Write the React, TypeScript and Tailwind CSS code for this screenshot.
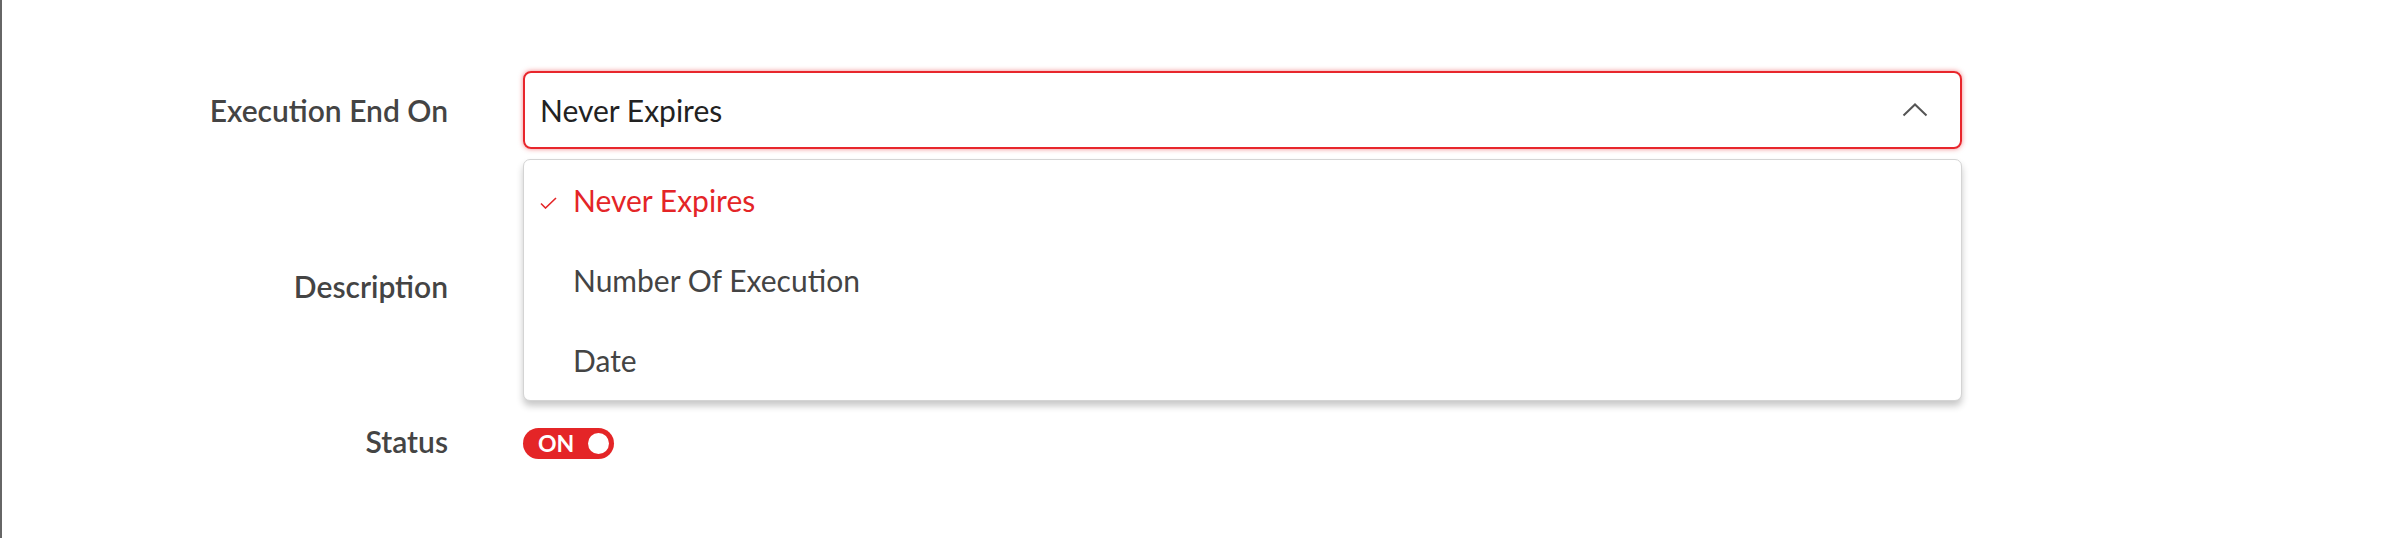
import { useState } from 'react';

const options = ['Never Expires', 'Number Of Execution', 'Date'];

function ChevronUp() {
  return (
    <svg width="26" height="14" viewBox="0 0 26 14" fill="none">
      <path d="M1.5 12.5L13 1.5L24.5 12.5" stroke="#555" strokeWidth="2" />
    </svg>
  );
}

function Check() {
  return (
    <svg width="17" height="12" viewBox="0 0 17 12" fill="none">
      <path d="M1 6.5L5.5 11L16 1" stroke="#e42527" strokeWidth="1.6" />
    </svg>
  );
}

export default function App() {
  const [selected] = useState(options[0]);

  return (
    <div className="h-[538px] w-full border-l-2 border-[#666] bg-white font-['Lato',sans-serif]">
      <div className="grid grid-cols-[446px_1439px] gap-x-[75px] pt-[71px]">
        <div className="flex h-[78px] items-center justify-end text-[30px] font-semibold text-[#444]">
          Execution End On
        </div>
        <div className="relative">
          <div className="flex h-[78px] items-center justify-between rounded-[8px] border-2 border-[#e8262c] pl-[15px] pr-[32px] text-[30px] text-[#222] shadow-[0_0_5px_rgba(232,38,44,0.55)]">
            <span>{selected}</span>
            <ChevronUp />
          </div>
          <ul className="absolute left-0 top-[88px] z-10 w-[1439px] rounded-[7px] border border-[#d4d4d4] bg-white shadow-[0_5px_7px_rgba(0,0,0,0.22)]">
            {options.map((opt) => (
              <li
                key={opt}
                className={`flex h-[80px] items-center text-[30px] ${
                  opt === selected ? 'text-[#e42527]' : 'text-[#444]'
                }`}
              >
                <span className="flex w-[49px] justify-end pr-[16px] pt-[6px]">
                  {opt === selected ? <Check /> : null}
                </span>
                {opt}
              </li>
            ))}
          </ul>
        </div>

        <div className="mt-[62px] flex h-[150px] items-center justify-end text-[30px] font-semibold text-[#444]">
          Description
        </div>
        <div className="mt-[62px] h-[150px] rounded-[8px] border border-[#ccc]" />

        <div className="mt-[67px] flex h-[31px] items-center justify-end pb-[4px] text-[30px] font-semibold text-[#444]">
          Status
        </div>
        <div className="mt-[67px] flex h-[31px]">
          <button
            type="button"
            className="flex h-[31px] w-[91px] items-center justify-between rounded-full bg-[#e42527] pl-[15px] pr-[5px] text-[23px] font-bold text-white"
          >
            ON
            <span className="size-[21px] rounded-full bg-white" />
          </button>
        </div>
      </div>
    </div>
  );
}
